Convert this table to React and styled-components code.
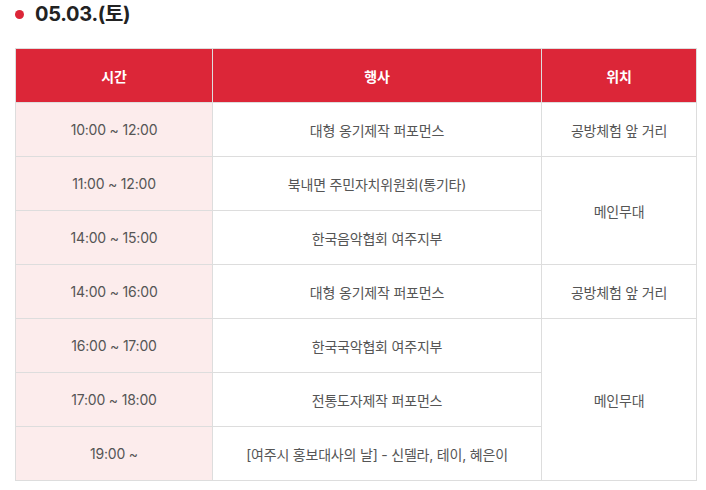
import styled, { createGlobalStyle } from 'styled-components'

const GlobalStyle = createGlobalStyle`
  body {
    margin: 0;
    background: #fff;
    font-family: Inter, "Noto Sans CJK KR", sans-serif;
  }
`

const Wrap = styled.div`
  padding: 0 10px 0 15px;
`

const DayTitle = styled.h3`
  display: flex;
  align-items: center;
  gap: 11px;
  margin: 0 0 21px;
  padding-top: 1px;
  font-size: 20px;
  font-weight: 700;
  color: #222;
  line-height: 26px;
  letter-spacing: -0.3px;

  &::before {
    content: '';
    width: 9px;
    height: 9px;
    border-radius: 50%;
    background: #dc2638;
  }
`

const Table = styled.table`
  width: 681px;
  border-collapse: collapse;
  table-layout: fixed;
  font-size: 14px;
  letter-spacing: -0.2px;
  color: #555;
  text-align: center;
`

const Th = styled.th`
  height: 53px;
  padding: 0;
  background: #dc2638;
  color: #fff;
  font-weight: 700;
  font-size: 14px;
  border: 1px solid #ddd;
  border-bottom: none;
`

const Td = styled.td`
  height: 53px;
  padding: 0;
  border: 1px solid #ddd;
  background: ${p => (p.$time ? '#fcecec' : '#fff')};
`

const rows = [
  { time: '10:00 ~ 12:00', event: '대형 옹기제작 퍼포먼스', place: '공방체험 앞 거리', span: 1 },
  { time: '11:00 ~ 12:00', event: '북내면 주민자치위원회(통기타)', place: '메인무대', span: 2 },
  { time: '14:00 ~ 15:00', event: '한국음악협회 여주지부' },
  { time: '14:00 ~ 16:00', event: '대형 옹기제작 퍼포먼스', place: '공방체험 앞 거리', span: 1 },
  { time: '16:00 ~ 17:00', event: '한국국악협회 여주지부', place: '메인무대', span: 3 },
  { time: '17:00 ~ 18:00', event: '전통도자제작 퍼포먼스' },
  { time: '19:00 ~', event: '[여주시 홍보대사의 날] - 신델라, 테이, 혜은이' },
]

export default function App() {
  return (
    <>
      <GlobalStyle />
      <Wrap>
        <DayTitle>05.03.(토)</DayTitle>
        <Table>
          <colgroup>
            <col style={{ width: 197 }} />
            <col style={{ width: 329 }} />
            <col style={{ width: 155 }} />
          </colgroup>
          <thead>
            <tr>
              <Th>시간</Th>
              <Th>행사</Th>
              <Th>위치</Th>
            </tr>
          </thead>
          <tbody>
            {rows.map((r, i) => (
              <tr key={i}>
                <Td $time>{r.time}</Td>
                <Td>{r.event}</Td>
                {r.place && <Td rowSpan={r.span}>{r.place}</Td>}
              </tr>
            ))}
          </tbody>
        </Table>
      </Wrap>
    </>
  )
}
